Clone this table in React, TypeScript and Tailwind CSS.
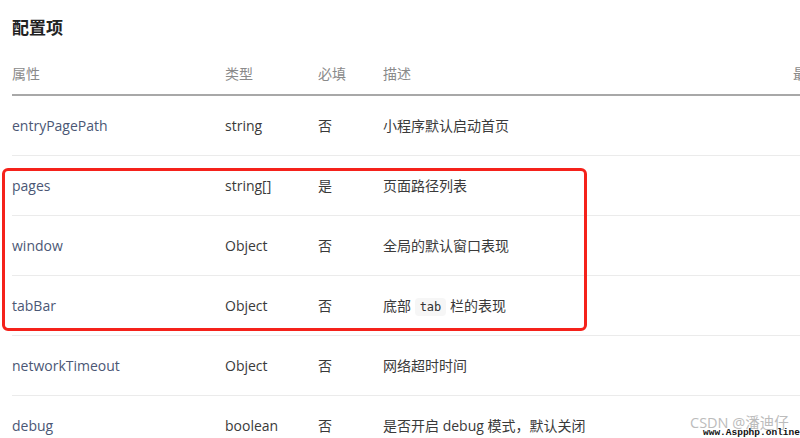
const rows = [
    { name: "entryPagePath", type: "string", req: "否", desc: <>小程序默认启动首页</> },
    { name: "pages", type: "string[]", req: "是", desc: <>页面路径列表</> },
    { name: "window", type: "Object", req: "否", desc: <>全局的默认窗口表现</> },
    {
        name: "tabBar", type: "Object", req: "否",
        desc: <>底部 <code className="bg-[#f6f6f6] px-[5px] py-[2px] rounded-sm text-[12px] font-['DejaVu_Sans_Mono',monospace] text-[#333]">tab</code> 栏的表现</>,
    },
    { name: "networkTimeout", type: "Object", req: "否", desc: <>网络超时时间</> },
    { name: "debug", type: "boolean", req: "否", desc: <>是否开启 debug 模式，默认关闭</> },
];

const cols = "grid grid-cols-[213px_93px_65px_410px_200px]";

export default function App() {
    return (
        <div className="relative w-[800px] h-[438px] overflow-hidden bg-white font-['Open_Sans','Noto_Sans_CJK_SC',sans-serif] text-[14px]">
            <div className="pl-3 pt-[14px]">
                <h2 className="text-[17px] font-bold text-[#222] leading-[28px]">配置项</h2>

                {/* header */}
                <div className={`${cols} mt-[11px] h-[43px] items-center text-[#8a8a8a] border-b-2 border-[#a8a8a8]`}>
                    <span>属性</span>
                    <span>类型</span>
                    <span>必填</span>
                    <span>描述</span>
                    <span>最低版本</span>
                </div>

                {rows.map((r) => (
                    <div key={r.name} className={`${cols} h-[60px] items-center border-b border-[#ebebeb] text-[#3a3a3a]`}>
                        <span className="text-[#4b5775]">{r.name}</span>
                        <span>{r.type}</span>
                        <span>{r.req}</span>
                        <span>{r.desc}</span>
                        <span />
                    </div>
                ))}
            </div>

            {/* red highlight box */}
            <div className="absolute left-[2px] top-[168px] w-[585px] h-[163px] border-[3px] border-[#f5221b] rounded-[6px]" />

            {/* watermark */}
            <div className="absolute left-[690px] top-[416px] text-[14.5px] text-[#bcbcbc] leading-none whitespace-nowrap">CSDN @潘迪仔</div>
            <div className="absolute left-[703px] top-[428px] text-[9.5px] font-bold text-[#111] font-['Liberation_Mono',monospace] leading-none whitespace-nowrap">www.Aspphp.online</div>
        </div>
    );
}
